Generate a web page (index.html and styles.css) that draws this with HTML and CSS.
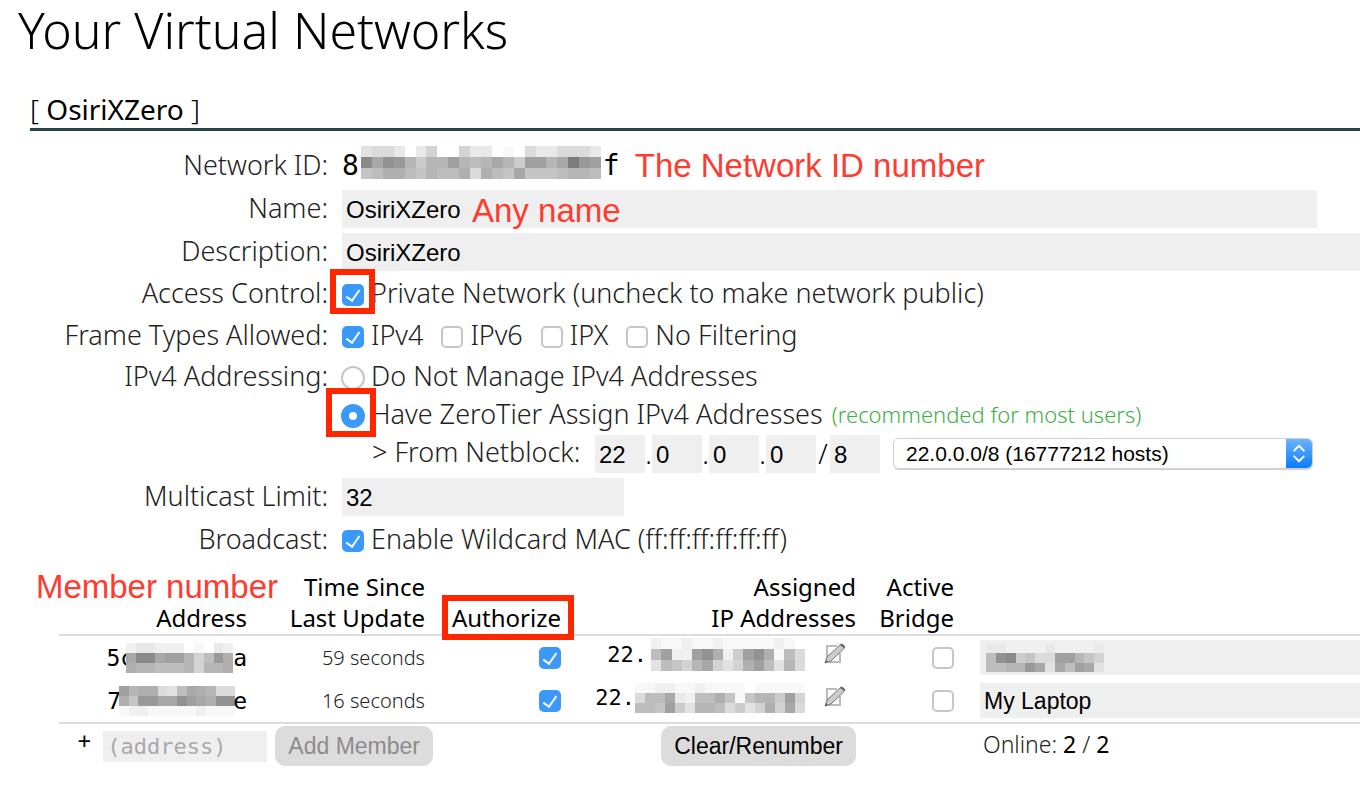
FILE: index.html
```html
<!DOCTYPE html>
<html lang="en">
<head>
<meta charset="utf-8">
<title>Your Virtual Networks</title>
<link rel="stylesheet" href="styles.css">
</head>
<body>
<main class="page">
  <h1 class="title">Your Virtual Networks</h1>
  <section class="network">
    <h2 class="network-name"><span class="bracket">[</span> OsiriXZero <span class="bracket">]</span></h2>
    <form class="settings">
      <div class="row">
        <span class="label">Network ID:</span>
        <div class="field network-id">
          <span>8</span><svg class="mosaic mosaic-id" data-cells="vuuwzwtzztwwzyzuwwuuuw jnklpsppmpqpnpsmmpnhlm rqooqrpqqouoqrnrrrqppq"></svg><span>f</span>
          <span class="note">The Network ID number</span>
        </div>
      </div>
      <div class="row">
        <label class="label" for="name">Name:</label>
        <div class="field name-field">
          <input class="text" id="name" type="text" value="OsiriXZero">
          <span class="note note-name">Any name</span>
        </div>
      </div>
      <div class="row">
        <label class="label" for="desc">Description:</label>
        <div class="field"><input class="text" id="desc" type="text" value="OsiriXZero"></div>
      </div>
      <div class="row row-check">
        <span class="label">Access Control:</span>
        <div class="field">
          <label class="option"><span class="mark mark-check"><input class="check" type="checkbox" checked></span>Private Network (uncheck to make network public)</label>
        </div>
      </div>
      <div class="row row-check">
        <span class="label">Frame Types Allowed:</span>
        <div class="field options">
          <label class="option"><input class="check" type="checkbox" checked>IPv4</label>
          <label class="option"><input class="check" type="checkbox">IPv6</label>
          <label class="option"><input class="check" type="checkbox">IPX</label>
          <label class="option"><input class="check" type="checkbox">No Filtering</label>
        </div>
      </div>
      <div class="row row-radio">
        <span class="label">IPv4 Addressing:</span>
        <div class="field">
          <label class="option"><input class="radio" type="radio" name="addressing">Do Not Manage IPv4 Addresses</label>
        </div>
      </div>
      <div class="row row-short">
        <span class="label"></span>
        <div class="field">
          <label class="option"><span class="mark mark-radio"><input class="radio" type="radio" name="addressing" checked></span>Have ZeroTier Assign IPv4 Addresses</label>
          <span class="hint">(recommended for most users)</span>
        </div>
      </div>
      <div class="row row-short">
        <span class="label"></span>
        <div class="field netblock">
          <span class="netblock-label">&gt; From Netblock:</span>
          <input class="text octet" type="text" value="22" aria-label="Octet 1"><span class="sep">.</span>
          <input class="text octet" type="text" value="0" aria-label="Octet 2"><span class="sep">.</span>
          <input class="text octet" type="text" value="0" aria-label="Octet 3"><span class="sep">.</span>
          <input class="text octet" type="text" value="0" aria-label="Octet 4"><span class="sep slash">/</span>
          <input class="text octet" type="text" value="8" aria-label="Prefix length">
          <span class="picker">
            <select class="select" aria-label="Netblock"><option>22.0.0.0/8 (16777212 hosts)</option></select>
            <svg class="arrows" viewBox="0 0 26 30"><path d="M8 12l5-5 5 5M8 18l5 5 5-5"/></svg>
          </span>
        </div>
      </div>
      <div class="row row-limit">
        <label class="label" for="limit">Multicast Limit:</label>
        <div class="field"><input class="text limit" id="limit" type="text" value="32"></div>
      </div>
      <div class="row">
        <span class="label">Broadcast:</span>
        <div class="field">
          <label class="option"><input class="check" type="checkbox" checked>Enable Wildcard MAC (ff:ff:ff:ff:ff:ff)</label>
        </div>
      </div>
    </form>

    <table class="members">
      <colgroup><col class="c-address"><col class="c-time"><col class="c-auth"><col class="c-ip"><col class="c-bridge"><col></colgroup>
      <thead>
        <tr>
          <th class="address"><span class="note note-member">Member number</span>Address</th>
          <th>Time Since<br>Last Update</th>
          <th><span class="mark mark-auth">Authorize</span></th>
          <th>Assigned<br>IP Addresses</th>
          <th>Active<br>Bridge</th>
          <th></th>
        </tr>
      </thead>
      <tbody>
        <tr>
          <td class="address"><div class="line mono"><span>5c</span><svg class="mosaic mosaic-a1" data-cells="xwwxxxzyzwx njjnmmptqlo oppqqqptppo"></svg><span>a</span></div></td>
          <td class="time">59 seconds</td>
          <td><div class="line"><input class="check" type="checkbox" checked aria-label="Authorize"></div></td>
          <td><div class="line ip"><span>22.</span><svg class="mosaic mosaic-ip1" data-cells="xyyxyyxyyyyyxyz qmxxmkoxsmkoyqu vqrtpntvtomqvpu"></svg><button class="edit" type="button" aria-label="Edit"><svg viewBox="0 0 24 24"><path class="sheet" d="M14 4H4v16h13v-9"/><path class="pencil" d="M2 21l2-6L18 2l4 3.500L8 19z"/><path class="tip" d="M2 21l1-3 2 2zM17 3l2-1.500 3.500 3L21 6z"/></svg></button></div></td>
          <td><div class="line"><input class="check" type="checkbox" aria-label="Active bridge"></div></td>
          <td class="note-cell"><div class="nick"><svg class="mosaic mosaic-n1" data-cells="wwxxxxwxxxxw qkjsruummprt qqpplnvnqmnv"></svg></div></td>
        </tr>
        <tr>
          <td class="address"><div class="line mono"><span>7</span><svg class="mosaic mosaic-a2" data-cells="mpoouvqnopuu orllnnkmnokk yxxyyyyyxyyy"></svg><span>e</span></div></td>
          <td class="time">16 seconds</td>
          <td><div class="line"><input class="check" type="checkbox" checked aria-label="Authorize"></div></td>
          <td><div class="line ip"><span>22.</span><svg class="mosaic mosaic-ip2" data-cells="yyxxyyxyyyyzyyyyy uqqnwxqqoryrppsmt qqrmsvppqusvtotnu"></svg><button class="edit" type="button" aria-label="Edit"><svg viewBox="0 0 24 24"><path class="sheet" d="M14 4H4v16h13v-9"/><path class="pencil" d="M2 21l2-6L18 2l4 3.500L8 19z"/><path class="tip" d="M2 21l1-3 2 2zM17 3l2-1.500 3.500 3L21 6z"/></svg></button></div></td>
          <td><div class="line"><input class="check" type="checkbox" aria-label="Active bridge"></div></td>
          <td class="note-cell"><input class="text nick" type="text" value="My Laptop" aria-label="Member name"></td>
        </tr>
      </tbody>
      <tfoot>
        <tr>
          <td colspan="2" class="add-cell"><div class="add"><span class="plus">+</span><input class="text new-address" type="text" placeholder="(address)" aria-label="Address"><button class="button" type="button" disabled>Add Member</button></div></td>
          <td></td>
          <td><button class="button" type="button">Clear/Renumber</button></td>
          <td></td>
          <td class="online">Online: <b>2</b> / <b>2</b></td>
        </tr>
      </tfoot>
    </table>
  </section>
</main>
<script src="mosaic.js"></script>
</body>
</html>
```
FILE: styles.css
```css
* { box-sizing: border-box; }

body {
  margin: 0;
  background: #fff;
  color: #222;
  font-family: "Noto Sans", "Open Sans", sans-serif;
  font-weight: 300;
  font-size: 27px;
  line-height: 36px;
}

.page { overflow-x: hidden; }

.title {
  margin: 0;
  padding-left: 18px;
  font-size: 50px;
  line-height: 60px;
  font-weight: 300;
  color: #000;
}

.network { margin: 31px 0 0 30px; }

.network-name {
  margin: 0 0 13px;
  padding-bottom: 1px;
  border-bottom: 3px solid #26444c;
  font-size: 28px;
  line-height: 36px;
  font-weight: 400;
  color: #000;
}

.bracket { font-weight: 300; }

.row {
  display: grid;
  grid-template-columns: 298px 1fr;
  column-gap: 14px;
  align-items: center;
  height: 43px;
}

.row-check { height: 42px; }
.row-radio { height: 39px; }
.row-short { height: 38px; }
.row-limit { height: 46px; padding-top: 4px; }

.label { padding-bottom: 2px; text-align: right; white-space: nowrap; }

.field {
  display: flex;
  align-items: center;
  white-space: nowrap;
  min-width: 0;
}

.network-id { font: 28px/36px "DejaVu Sans Mono", monospace; color: #000; }

.note {
  font: 33px/30px "Liberation Sans", Arial, sans-serif;
  color: #ff3b30;
  white-space: nowrap;
}

.network-id .note { margin-left: 15px; }
.name-field { position: relative; padding-right: 43px; }
.note-name { position: absolute; left: 130px; top: 6px; }

.text {
  width: 100%;
  height: 38px;
  padding: 2px 4px 0;
  border: 0;
  background: #efefef;
  color: #000;
  font: 24px/36px "Liberation Sans", Arial, sans-serif;
}

.option { display: inline-flex; align-items: center; gap: 7px; padding-bottom: 2px; }
.options { gap: 18px; }

.check, .radio {
  appearance: none;
  position: relative;
  flex: none;
  width: 22px;
  height: 22px;
  margin: 4px 0 0;
  border: 2px solid #c6c6c6;
  border-radius: 5px;
  background: #fff;
}

.radio { width: 24px; height: 24px; margin: 4px -1px 0; border-radius: 50%; }

.check:checked, .radio:checked { border-color: #3b99fc; background: #3b99fc; }

.check:checked::after {
  content: "";
  box-sizing: border-box;
  position: absolute;
  left: 5px;
  top: 1px;
  width: 8px;
  height: 14px;
  border: solid #fff;
  border-width: 0 2px 2px 0;
  transform: rotate(35deg);
}

.radio:checked::after {
  content: "";
  position: absolute;
  inset: 6px;
  border-radius: 50%;
  background: #fff;
}

.mark { position: relative; display: inline-flex; }

.mark::after {
  content: "";
  position: absolute;
  border: 6px solid #ff2600;
  pointer-events: none;
}

.mark-check::after { inset: -11px -11px -8px -12px; }
.mark-radio::after { inset: -12px -12px -9px -16px; }
.mark-auth::after { inset: -7px -13px -7px -10px; }

.hint { margin-left: 9px; padding-bottom: 2px; font-size: 22px; color: #3cb043; }

.netblock-label { width: 223px; margin-left: 30px; padding-bottom: 3px; }
.octet { width: 50px; flex: none; }
.sep { width: 7px; text-align: center; color: #000; }
.slash { width: 14px; }

.picker {
  display: flex;
  flex: none;
  width: 420px;
  height: 31px;
  margin-left: 13px;
  border: 1px solid #d0d0d0;
  border-radius: 6px;
  overflow: hidden;
  box-shadow: 0 1px 1px #ccc;
}

.select {
  appearance: none;
  flex: 1;
  padding: 0 12px;
  border: 0;
  background: #fff;
  color: #000;
  font: 21px/29px "Liberation Sans", Arial, sans-serif;
}

.arrows {
  width: 26px;
  background: linear-gradient(#6cb3fa, #0a7cff);
  fill: none;
  stroke: #fff;
  stroke-width: 2;
  stroke-linecap: round;
  stroke-linejoin: round;
}

.limit { width: 282px; }

.mosaic { flex: none; display: block; }
.mosaic-id { width: 240px; height: 33px; margin: -6px 2px 0; }
.mosaic-a1 { width: 107px; height: 30px; margin-left: -8px; }
.mosaic-a2 { width: 116px; height: 30px; margin-left: -2px; margin-right: -2px; }
.mosaic-ip1 { width: 154px; height: 33px; margin-left: 4px; margin-top: -6px; }
.mosaic-ip2 { width: 170px; height: 30px; margin-top: -6px; }
.mosaic-n1 { width: 118px; height: 28px; margin-left: 2px; }

.members {
  width: calc(100% - 29px);
  margin: 10px 0 0 29px;
  table-layout: fixed;
  border-collapse: separate;
  border-spacing: 0;
}

.c-address { width: 212px; }
.c-time { width: 166px; }
.c-auth { width: 136px; }
.c-ip { width: 295px; }
.c-bridge { width: 98px; }

.members th, .members td {
  padding: 0 12px 0 0;
  text-align: right;
  white-space: nowrap;
}

.members th {
  padding-bottom: 1px;
  border-bottom: 2px solid #dcdcdc;
  vertical-align: bottom;
  font-size: 24px;
  line-height: 31px;
  font-weight: 400;
  color: #000;
}

.members .address { position: relative; padding-right: 24px; }
.note-member { position: absolute; right: -7px; top: 1px; }
.members tbody td { height: 43px; }
.members tbody tr:last-child td { border-bottom: 2px solid #dcdcdc; height: 45px; }
.members .time { font-size: 20px; }
.members .check { margin-top: 1px; }

.line {
  display: flex;
  justify-content: flex-end;
  align-items: center;
  line-height: 30px;
}

.mono, .ip { font-family: "DejaVu Sans Mono", monospace; font-size: 22px; color: #000; }
.ip span { margin-top: -5px; }
.mono { font-size: 23px; }

.edit {
  width: 24px;
  height: 24px;
  margin: -8px 9px 0 18px;
  padding: 0;
  border: 0;
  background: none;
}

.edit svg { display: block; width: 24px; height: 24px; }
.sheet { fill: none; stroke: #bbb; stroke-width: 2; }
.pencil { fill: #ccc; stroke: #777; stroke-width: 1; }
.tip { fill: #666; }

.members .note-cell { padding: 0 0 0 14px; }

.nick {
  display: flex;
  align-items: center;
  height: 35px;
  padding: 0 4px;
  background: #efefef;
  font-size: 23px;
}

.members .add-cell { padding: 0 4px 0 0; }
.add { display: flex; align-items: center; justify-content: flex-end; }
.plus { margin: -10px 12px 0 0; color: #000; font-weight: 400; font-size: 24px; }

.new-address {
  width: 164px;
  height: 31px;
  margin-right: 8px;
  padding: 0 4px;
  font: 22px/30px "DejaVu Sans Mono", monospace;
}

.new-address::placeholder { color: #a9a9a9; opacity: 1; }

.button {
  height: 40px;
  margin: 2px 0;
  padding: 0 13px;
  border: 0;
  border-radius: 10px;
  background: #dcdcdc;
  color: #000;
  font: 23px/40px "Liberation Sans", Arial, sans-serif;
}

.button:disabled { color: #8c8c8c; }

.members .online { padding: 0 0 4px 17px; text-align: left; font-size: 23px; }
.online b { font-weight: 400; color: #000; }
```
FILE: mosaic.js
```js
// Each data-cells row is a string of base-36 grey levels, 0 = black and z = white.
document.querySelectorAll("[data-cells]").forEach(function (svg) {
  var rows = svg.dataset.cells.split(" ");
  svg.setAttribute("viewBox", "0 0 " + rows[0].length + " " + rows.length);
  svg.setAttribute("preserveAspectRatio", "none");
  svg.setAttribute("shape-rendering", "crispEdges");
  rows.forEach(function (row, y) {
    row.split("").forEach(function (level, x) {
      var v = Math.round(parseInt(level, 36) / 35 * 255);
      var cell = document.createElementNS("http://www.w3.org/2000/svg", "rect");
      cell.setAttribute("x", x);
      cell.setAttribute("y", y);
      cell.setAttribute("width", 1);
      cell.setAttribute("height", 1);
      cell.setAttribute("fill", "rgb(" + v + "," + v + "," + v + ")");
      svg.appendChild(cell);
    });
  });
});
```
